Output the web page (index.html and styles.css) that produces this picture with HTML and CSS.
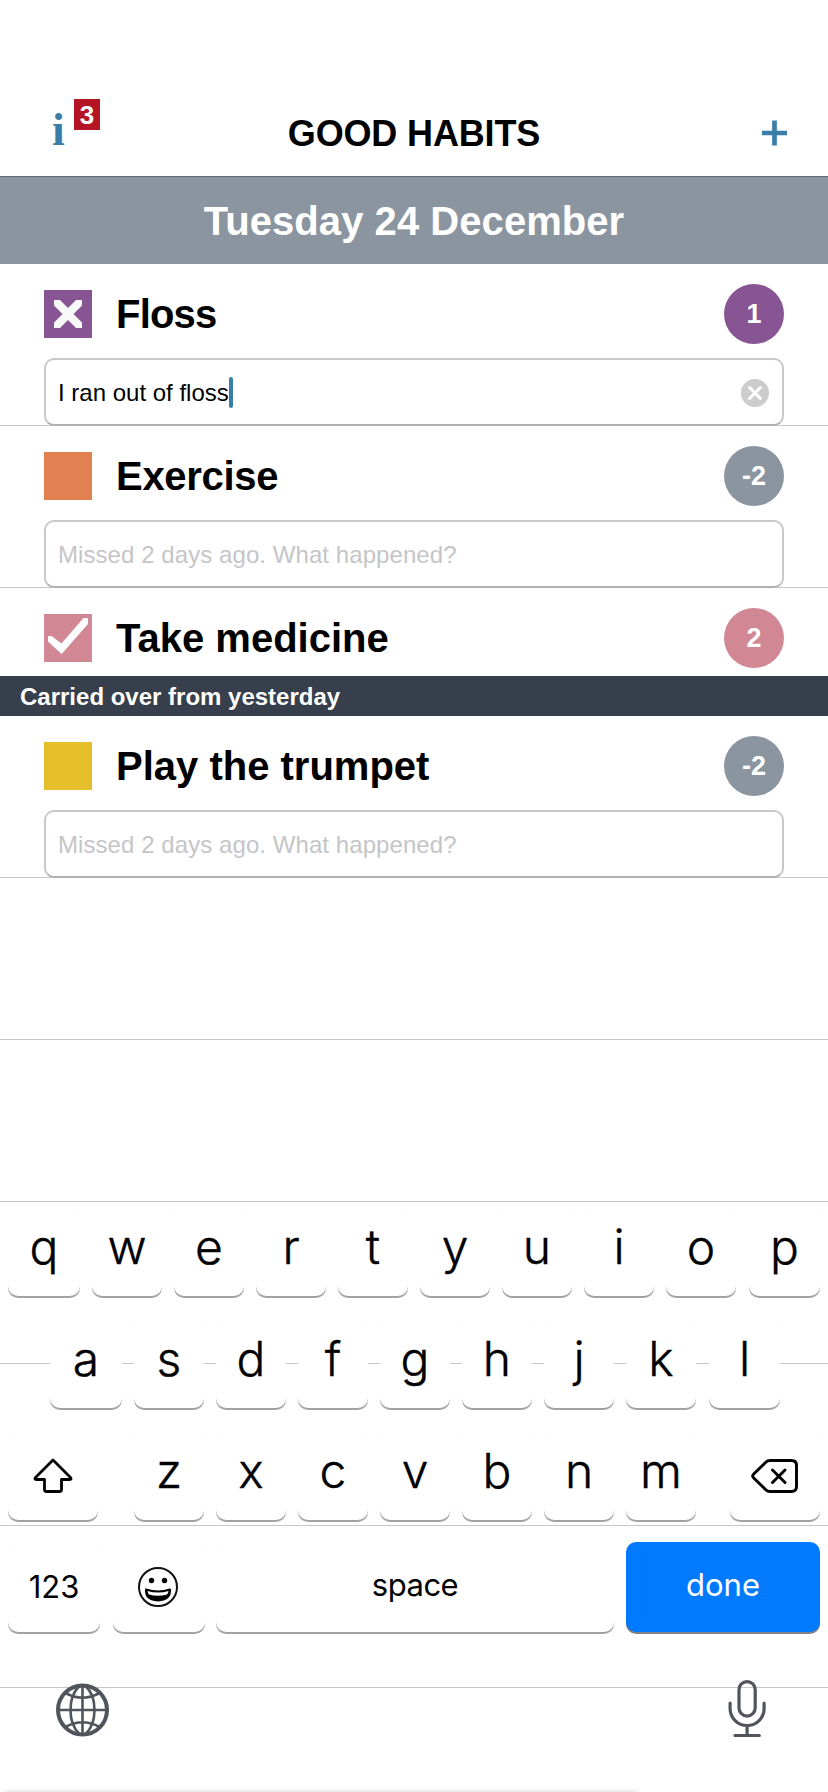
FILE: index.html
```html
<!DOCTYPE html>
<html lang="en">
<head>
<meta charset="utf-8">
<title>Good Habits</title>
<link rel="stylesheet" href="styles.css">
</head>
<body>
<div class="screen">
  <header class="nav">
    <div class="info">i<span class="info-badge">3</span></div>
    <h1 class="title">GOOD HABITS</h1>
    <svg class="add" viewBox="0 0 26 26"><path d="M0 13h25M12.500 0.500v25" stroke="#3a7ea8" stroke-width="4.700"/></svg>
  </header>
  <div class="date"><span>Tuesday 24 December</span></div>

  <main class="habits">
    <section class="habit">
      <div class="habit-head">
        <svg class="box purple" viewBox="0 0 48 48"><path fill="#f8f8f8" d="M10 10h6l8 8 8-8h6v5.500l-8.500 8.500 8.500 8.500V38h-6l-8-8-8 8h-6v-5.500l8.500-8.500-8.500-8.500z"/></svg>
        <h2 class="name tight">Floss</h2>
        <span class="count purple">1</span>
      </div>
      <div class="note">
        <span class="typed">I ran out of floss</span><span class="caret"></span>
        <svg class="clear" viewBox="0 0 28 28"><circle cx="14" cy="14" r="14" fill="#ccc"/><path d="M8.500 8.500l11 11M19.500 8.500l-11 11" stroke="#fff" stroke-width="3" stroke-linecap="round"/></svg>
      </div>
    </section>
    <section class="habit">
      <div class="habit-head">
        <span class="box orange"></span>
        <h2 class="name snug">Exercise</h2>
        <span class="count slate">-2</span>
      </div>
      <div class="note"><span class="placeholder">Missed 2 days ago. What happened?</span></div>
    </section>
    <section class="habit short">
      <div class="habit-head">
        <svg class="box pink" viewBox="0 0 48 48"><path fill="#fff" d="M4 22h3.500l10 7.500L39.500 4H44v6L17.600 40 4 27.500z"/></svg>
        <h2 class="name">Take medicine</h2>
        <span class="count pink">2</span>
      </div>
    </section>
    <div class="carried"><span>Carried over from yesterday</span></div>
    <section class="habit">
      <div class="habit-head">
        <span class="box yellow"></span>
        <h2 class="name">Play the trumpet</h2>
        <span class="count slate">-2</span>
      </div>
      <div class="note"><span class="placeholder">Missed 2 days ago. What happened?</span></div>
    </section>
    <div class="habit"></div>
    <div class="habit"></div>
    <div class="habit"></div>
    <div class="habit"></div>
    <div class="habit"></div>
  </main>

  <div class="keyboard">
    <div class="keys row1">
      <span class="key wide">q</span><span class="key">w</span><span class="key">e</span><span class="key">r</span><span class="key">t</span><span class="key">y</span><span class="key">u</span><span class="key">i</span><span class="key">o</span><span class="key last">p</span>
    </div>
    <div class="keys row2">
      <span class="key wide">a</span><span class="key">s</span><span class="key">d</span><span class="key">f</span><span class="key">g</span><span class="key">h</span><span class="key">j</span><span class="key">k</span><span class="key last">l</span>
    </div>
    <div class="keys row3">
      <span class="key mod shift"><svg width="40" height="36" viewBox="0 0 40 36"><path d="M20 2L2.500 19.500q-1.500 2 .8 2H11.500V31.500q0 2 2 2h13q2 0 2-2V21.500h8.200q2.300 0 .8-2z" fill="none" stroke="#000" stroke-width="2.800" stroke-linejoin="round"/></svg></span>
      <span class="key">z</span><span class="key">x</span><span class="key">c</span><span class="key">v</span><span class="key">b</span><span class="key">n</span><span class="key">m</span>
      <span class="key mod delete"><svg width="48" height="36" viewBox="0 0 48 36"><path d="M19 2.500h21.500q5 0 5 5v21q0 5-5 5H19q-2.500 0-4-1.500L2.700 20q-2-2 0-4L15 4q1.500-1.500 4-1.500M21.500 12l12.500 12.500M34 12L21.500 24.500" fill="none" stroke="#000" stroke-width="2.900" stroke-linecap="round" stroke-linejoin="round"/></svg></span>
    </div>
    <div class="keys row4">
      <span class="key num">123</span>
      <span class="key emoji"><svg width="42" height="42" viewBox="0 0 42 42"><circle cx="21" cy="21" r="19" fill="none" stroke="#111" stroke-width="2"/><circle cx="14.500" cy="14.500" r="2.700"/><circle cx="27.500" cy="14.500" r="2.700"/><path d="M9 23.500q12 3.800 24 0q.6 10.700-12 10.900Q8.400 34.200 9 23.500z" fill="#000" stroke="#000" stroke-width="2" stroke-linejoin="round"/><path d="M10.500 25q10.500 3.200 21 0q-.3 2.500-1.500 3.500q-9 2.400-18 0q-1.200-1-1.500-3.500z" fill="#fff"/></svg></span>
      <span class="key space">space</span>
      <span class="key done">done</span>
    </div>
    <div class="tools">
      <svg width="54" height="54" viewBox="0 0 54 54" fill="none" stroke="#50555c"><circle cx="27.500" cy="27" r="24.500" stroke-width="4"/><path d="M27.500 2v50M3 27h49M24.500 3C12.500 14 12.500 40 24.500 51M30.500 3c12 11 12 37 0 48M10.500 10q17 9.500 34 0M10.500 44q17-9.500 34 0" stroke-width="2.600"/></svg>
      <svg class="mic" width="40" height="58" viewBox="0 0 40 58" fill="none" stroke="#50555c" stroke-width="3.200" stroke-linecap="round"><rect x="12" y="1.600" width="16.200" height="34.500" rx="8.100"/><path d="M3.100 23v5.500a17 17 0 0 0 34 0V23M20.100 46v9.500M8 55.500h24.300"/></svg>
    </div>
    <div class="edge"></div>
  </div>
</div>
</body>
</html>
```

FILE: styles.css
```css
* { box-sizing: border-box; }
body { margin: 0; background: #fff; }
.screen {
  position: relative;
  width: 828px;
  height: 1792px;
  overflow: hidden;
  background: #fff;
  color: #000;
  font-family: "Liberation Sans", Arial, sans-serif;
}
h1, h2 { margin: 0; font-weight: bold; }

.nav {
  display: grid;
  grid-template-columns: 150px 1fr 150px;
  height: 176px;
  padding-top: 90px;
  align-items: center;
}
.info {
  position: relative;
  justify-self: start;
  height: 54px;
  margin-left: 52px;
  font: bold 46px/48px "Liberation Serif", serif;
  color: #3a7ea8;
}
.info-badge {
  position: absolute;
  left: 22px;
  top: -7px;
  width: 26px;
  height: 31px;
  background: #b41424;
  color: #fff;
  font: bold 26px/32px "Liberation Sans", Arial, sans-serif;
  text-align: center;
}
.title { padding-top: 2px; font-size: 36px; line-height: 40px; text-align: center; white-space: nowrap; letter-spacing: -0.15px; }
.add { width: 26px; height: 26px; justify-self: end; margin-right: 40px; margin-bottom: 1px; }

.date {
  height: 88px;
  border-top: 1px solid #5f6974;
  background: #8b95a0;
  color: #fff;
  font-size: 40px;
  font-weight: bold;
  line-height: 88px;
  letter-spacing: 0.05px;
  text-align: center;
}

.habit { height: 162px; padding: 20px 44px 0; border-bottom: 1px solid #c8c8c8; }
.habit.short { height: 88px; border-bottom: 0; }
.habit-head { display: flex; align-items: center; height: 60px; }
.box { width: 48px; height: 48px; }
.name { flex: 1; padding-left: 24px; font-size: 40px; line-height: 61px; }
.tight { letter-spacing: -0.8px; }
.snug { letter-spacing: -0.3px; }
.count {
  width: 60px;
  height: 60px;
  border-radius: 50%;
  color: #fff;
  font-size: 27px;
  font-weight: bold;
  line-height: 61px;
  text-align: center;
}
.purple { background: #885594; }
.orange { background: #e18050; }
.pink { background: #d28894; }
.yellow { background: #e6bf2d; }
.slate { background: #8b95a0; }

.note {
  display: flex;
  align-items: center;
  height: 68px;
  margin-top: 14px;
  padding: 0 13px 0 12px;
  border: 2px solid #c8c8c8;
  border-bottom: 2px solid #b0b0b0;
  border-radius: 10px;
  font-size: 24px;
  line-height: 32px;
  white-space: nowrap;
}
.typed, .placeholder { padding-top: 2px; letter-spacing: 0.07px; }
.typed { letter-spacing: 0; }
.placeholder { color: #c5c5c7; }
.caret { width: 4px; height: 31px; border-radius: 2px; background: #3a7ea8; }
.clear { width: 28px; height: 28px; margin: 1px 0 0 auto; }

.carried {
  height: 40px;
  padding-left: 20px;
  background: #363f4b;
  color: #fff;
  font-size: 24px;
  font-weight: bold;
  line-height: 41px;
}

/* The keyboard floats over the lower part of the list. */
.keyboard {
  position: absolute;
  left: 0;
  top: 1206px;
  width: 828px;
  height: 586px;
  font-family: Inter, "Open Sans", sans-serif;
}
.keys { display: flex; gap: 12px; height: 90px; margin-bottom: 22px; padding: 0 8px; }
.row2 { padding-left: 50px; }
.key {
  width: 70px;
  height: 90px;
  border-radius: 10px;
  background: #fff;
  box-shadow: 0 2px 0 #a3a3a5;
  font-size: 48px;
  font-weight: 300;
  -webkit-text-stroke: 0.4px #000;
  line-height: 82px;
  text-align: center;
}
.wide { width: 72px; }
.last { width: 71px; margin-left: 1px; }
.mod { display: flex; width: 90px; padding-top: 1px; justify-content: center; align-items: center; }
.shift { margin-right: 24px; }
.delete { margin-left: 22px; }
.num, .space, .done { font-size: 31px; font-weight: 400; line-height: 86px; letter-spacing: -0.5px; -webkit-text-stroke: 0; }
.num { width: 92px; line-height: 90px; letter-spacing: 0; }
.emoji { display: flex; justify-content: center; align-items: center; width: 92px; margin-left: 1px; padding-right: 2px; }
.space { width: 398px; margin-left: -1px; }
.done { width: 194px; background: #007aff; color: #fff; box-shadow: 0 2px 0 #808287; letter-spacing: 0; }
.tools { display: flex; justify-content: space-between; padding: 29px 61px 0 55px; }
.mic { margin-top: -3px; }
.edge {
  position: absolute;
  left: 4px;
  bottom: -4px;
  width: 634px;
  height: 4px;
  box-shadow: 0 0 5px rgba(0, 0, 0, .2);
}
```
